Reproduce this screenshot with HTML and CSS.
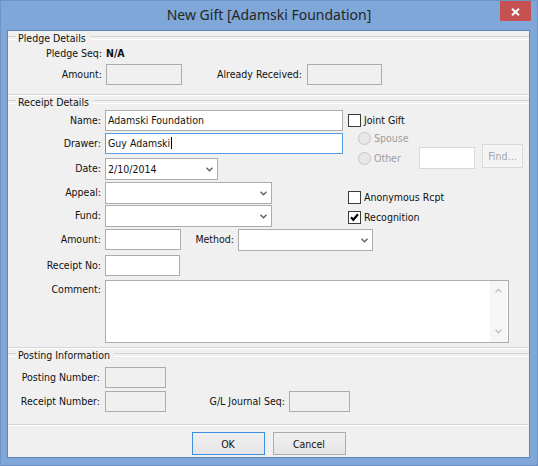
FILE: index.html
```html
<!DOCTYPE html>
<html lang="en">
<head>
  <meta charset="UTF-8" />
  <title>New Gift</title>
  <link rel="stylesheet" href="styles.css">
</head>
<body>
  <div class="window">
    <div class="titlebar">
      <div></div>
      <div class="title">New Gift [Adamski Foundation]</div>
      <button class="close" title="Close">
        <svg width="9" height="8" viewBox="0 0 9 8"><path d="M1 0.8 L8 7.2 M8 0.8 L1 7.2" stroke="#fff" stroke-width="2"/></svg>
      </button>
    </div>

    <div class="client">
      <!-- pledge -->
      <section class="group pledge">
        <div class="group-title"><span>Pledge Details</span></div>
        <div class="row seq">
          <span class="lbl">Pledge Seq:</span>
          <b>N/A</b>
        </div>
        <div class="row">
          <span class="lbl">Amount:</span>
          <div class="field disabled w76"></div>
          <span class="lbl received">Already Received:</span>
          <div class="field disabled w75"></div>
        </div>
      </section>

      <!-- receipt -->
      <section class="group receipt">
        <div class="group-title"><span>Receipt Details</span></div>
        <div class="split">
          <div class="left">
            <div class="row">
              <span class="lbl">Name:</span>
              <div class="field w238">Adamski Foundation</div>
            </div>
            <div class="row drawer">
              <span class="lbl">Drawer:</span>
              <div class="field focus w238">Guy Adamski<span class="caret"></span></div>
            </div>
            <div class="row date">
              <span class="lbl">Date:</span>
              <div class="combo w113"><span>2/10/2014</span><svg class="chev" width="7" height="5" viewBox="0 0 7 5"><path d="M0.5 0.8 L3.5 3.8 L6.5 0.8" /></svg></div>
            </div>
            <div class="row appeal">
              <span class="lbl">Appeal:</span>
              <div class="combo w167"><span></span><svg class="chev" width="7" height="5" viewBox="0 0 7 5"><path d="M0.5 0.8 L3.5 3.8 L6.5 0.8" /></svg></div>
            </div>
            <div class="row fund">
              <span class="lbl">Fund:</span>
              <div class="combo w167"><span></span><svg class="chev" width="7" height="5" viewBox="0 0 7 5"><path d="M0.5 0.8 L3.5 3.8 L6.5 0.8" /></svg></div>
            </div>
          </div>

          <div class="right">
            <div class="check joint"><span class="box"></span>Joint Gift</div>
            <div class="opt spouse"><span class="radio"></span><span class="opt-text">Spouse</span></div>
            <div class="opt other">
              <span class="radio"></span><span class="opt-text">Other</span>
              <div class="field pale w56"></div>
              <button class="btn find" disabled>Find…</button>
            </div>
            <div class="check anon"><span class="box"></span>Anonymous Rcpt</div>
            <div class="check recog">
              <span class="box"><svg width="11" height="11" viewBox="0 0 11 11"><path d="M2 5.2 L4.3 7.8 L9 2.2" /></svg></span>Recognition
            </div>
          </div>
        </div>

        <div class="row amount">
          <span class="lbl">Amount:</span>
          <div class="field w76"></div>
          <span class="lbl method">Method:</span>
          <div class="combo w135"><span></span><svg class="chev" width="7" height="5" viewBox="0 0 7 5"><path d="M0.5 0.8 L3.5 3.8 L6.5 0.8" /></svg></div>
        </div>
        <div class="row receipt-no">
          <span class="lbl">Receipt No:</span>
          <div class="field w75"></div>
        </div>
        <div class="row comment">
          <span class="lbl">Comment:</span>
          <div class="memo">
            <div class="scroll">
              <svg width="7" height="5" viewBox="0 0 7 5"><path d="M0.5 4.2 L3.5 1.2 L6.5 4.2" /></svg>
              <svg width="7" height="5" viewBox="0 0 7 5"><path d="M0.5 0.8 L3.5 3.8 L6.5 0.8" /></svg>
            </div>
          </div>
        </div>
      </section>

      <!-- posting -->
      <section class="group posting">
        <div class="group-title"><span>Posting Information</span></div>
        <div class="row post-no">
          <span class="lbl">Posting Number:</span>
          <div class="field disabled w61"></div>
        </div>
        <div class="row rcpt-no">
          <span class="lbl">Receipt Number:</span>
          <div class="field disabled w61"></div>
          <span class="lbl journal">G/L Journal Seq:</span>
          <div class="field disabled w61"></div>
        </div>
      </section>

      <div class="buttons">
        <button class="btn default">OK</button>
        <button class="btn">Cancel</button>
      </div>
    </div>
  </div>
</body>
</html>
```
FILE: styles.css
```css
* {
  box-sizing: border-box;
}

body {
  margin: 0;
  font-family: "DejaVu Sans Condensed", "DejaVu Sans", sans-serif;
  font-size: 10.5px;
  color: #111;
}

.window {
  width: 538px;
  height: 466px;
  background: #7fa7d7;
  border: 1px solid #6d94c4;
  display: flex;
  flex-direction: column;
}

/* title bar */
.titlebar {
  height: 29px;
  display: grid;
  grid-template-columns: 1fr auto 1fr;
}

.title {
  font-family: "Noto Sans", sans-serif;
  font-size: 14px;
  color: #262626;
  line-height: 28px;
  white-space: nowrap;
}

.close {
  justify-self: end;
  width: 31px;
  height: 20px;
  margin-right: 6px;
  padding: 2px 0 0;
  border: 0;
  background: #c75050;
  display: flex;
  align-items: center;
  justify-content: center;
}

.client {
  margin-left: 6px;
  width: 523px;
  height: 428px;
  border: 1px solid #5e86b8;
  background: #f0f0f0;
  display: flex;
  flex-direction: column;
}

/* group boxes */
.group {
  border-bottom: 1px solid #d5d5d5;
  box-shadow: 0 1px 0 #fff;
  --lw: 93px;
  --gap: 4px;
}

.group-title {
  display: flex;
  align-items: center;
  height: 14px;
  line-height: 14px;
}

.group-title::before,
.group-title::after {
  content: "";
  height: 2px;
  border-top: 1px solid #d5d5d5;
  border-bottom: 1px solid #fff;
}

.group-title::before {
  width: 8px;
  margin-right: 2px;
}

.group-title::after {
  flex: 1;
  margin-left: 4px;
}

.row {
  display: flex;
  align-items: flex-start;
}

.lbl {
  width: var(--lw);
  margin-right: var(--gap);
  text-align: right;
  line-height: 21px;
  white-space: nowrap;
  flex-shrink: 0;
}

.pledge {
  --lw: 94px;
  padding-bottom: 9px;
}

.pledge .seq {
  margin-top: 1px;
  height: 14px;
}

.pledge .seq .lbl,
.pledge .seq b {
  line-height: 14px;
}

.pledge .seq + .row {
  margin-top: 4px;
}

.lbl.received {
  width: 120px;
  margin-right: 5px;
}

/* fields */
.field {
  height: 21px;
  line-height: 19px;
  padding-left: 2px;
  border: 1px solid #acacac;
  background: #fff;
  white-space: nowrap;
}

.field.disabled {
  background: #f0f0f0;
}

.field.focus {
  border-color: #569de5;
}

.field.pale {
  border-color: #d9d9d9;
  height: 22px;
}

.caret {
  display: inline-block;
  width: 1px;
  height: 12px;
  margin-left: 1px;
  background: #000;
  vertical-align: -2px;
}

.combo {
  height: 22px;
  padding: 0 4px 0 2px;
  border: 1px solid #acacac;
  background: #fff;
  display: flex;
  align-items: center;
  justify-content: space-between;
}

.chev path {
  fill: none;
  stroke: #666;
  stroke-width: 1.5;
}

.combo .lbl,
.combo span {
  line-height: 20px;
}

.w56 { width: 56px; }
.w61 { width: 61px; }
.w75 { width: 75px; }
.w76 { width: 76px; }
.w113 { width: 113px; }
.w135 { width: 135px; }
.w167 { width: 167px; }
.w238 { width: 238px; }

/* receipt */
.receipt {
  padding-bottom: 4px;
}

.split {
  display: flex;
  margin-top: 1px;
}

.left {
  width: 335px;
}

.drawer { margin-top: 2px; }
.date { margin-top: 4px; }
.appeal { margin-top: 2px; }
.fund { margin-top: 1px; }
.amount { margin-top: 2px; }
.receipt-no { margin-top: 4px; }
.comment { margin-top: 4px; }

.lbl.method {
  width: 53px;
}

.comment .lbl {
  line-height: 19px;
}

.memo {
  width: 404px;
  height: 63px;
  border: 1px solid #acacac;
  background: #fff;
  display: flex;
  justify-content: flex-end;
}

.scroll {
  width: 17px;
  margin-right: 1px;
  background: #f6f6f6;
  display: flex;
  flex-direction: column;
  align-items: center;
  justify-content: space-between;
  padding: 7px 0 8px;
}

.scroll path {
  fill: none;
  stroke: #c4c4c4;
  stroke-width: 1.5;
}

/* check boxes and radios */
.right {
  margin-left: 5px;
  display: flex;
  flex-direction: column;
}

.check,
.opt {
  display: flex;
  align-items: center;
  height: 14px;
  white-space: nowrap;
}

.box {
  width: 13px;
  height: 13px;
  margin-right: 3px;
  border: 1px solid #3a3a3a;
  background: #fff;
  display: flex;
  align-items: center;
  justify-content: center;
}

.box path {
  fill: none;
  stroke: #000;
  stroke-width: 2.1;
}

.joint { margin-top: 3px; }
.spouse { margin-top: 4px; }
.anon { margin-top: 20px; }
.recog { margin-top: 6px; }

.opt {
  padding-left: 10px;
  color: #9d9d9d;
}

.radio {
  width: 13px;
  height: 13px;
  margin-right: 3px;
  border: 1px solid #c6c6c6;
  border-radius: 50%;
  background: #e7e7e7;
}

.opt-text {
  width: 45px;
}

.opt.other {
  height: 24px;
  margin-top: 1px;
}

/* buttons */
.btn {
  width: 73px;
  height: 23px;
  padding: 0;
  font: inherit;
  color: #111;
  border: 1px solid #acacac;
  background: linear-gradient(#f0f0f0, #e5e5e5);
}

.btn.default {
  border-color: #3f8fdf;
}

.btn.find {
  width: 41px;
  height: 24px;
  margin-left: 7px;
  align-self: flex-start;
  margin-top: -2px;
  color: #a3a3a3;
  border-color: #d9d9d9;
  background: #f4f4f4;
}

/* posting */
.posting {
  --lw: 92px;
  --gap: 5px;
  padding-bottom: 12px;
}

.post-no { margin-top: 5px; }
.rcpt-no { margin-top: 3px; }

.lbl.journal {
  width: 119px;
  margin-right: 4px;
}

.buttons {
  display: flex;
  justify-content: center;
  gap: 8px;
  padding-top: 7px;
}
```
